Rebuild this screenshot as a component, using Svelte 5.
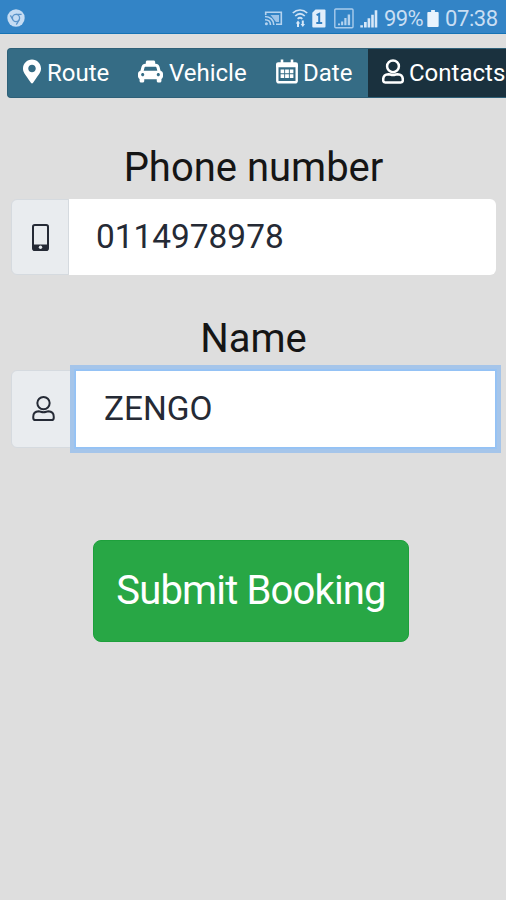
<script lang="ts">
  let phone = $state("0114978978");
  let name = $state("ZENGO");
  let active = $state("Contacts");

  const tabs = ["Route", "Vehicle", "Date", "Contacts"];
</script>

{#snippet person(cls: string)}
  <svg class={cls} viewBox="0 0 22 25" fill="none" stroke="currentColor">
    <circle cx="11" cy="7.3" r="5.9" />
    <path d="M6.4 15.2C3.2 15.4 1.2 17.6 1.2 20.4V21.6C1.2 22.8 2 23.6 3.2 23.6H18.8C20 23.6 20.8 22.8 20.8 21.6V20.4C20.8 17.6 18.8 15.4 15.6 15.2C14.2 15.2 13 16 11 16S7.8 15.2 6.4 15.2Z" />
  </svg>
{/snippet}

<div class="screen">
  <header class="status">
    <svg class="chrome" viewBox="0 0 18 18">
      <circle cx="9" cy="9" r="8.7" fill="#c5dcf3" />
      <circle cx="9" cy="9" r="3.6" fill="#c5dcf3" stroke="#5b94ca" stroke-width="1.3" />
      <path d="M9 5.4H14.6M5.9 10.8L3.4 6.4M12.1 10.8L9.3 15.6" fill="none" stroke="#5b94ca" stroke-width="1.3" />
    </svg>
    <svg class="indicators" viewBox="0 0 116 22">
      <g fill="none" stroke="#b5d3ef" stroke-width="1.6">
        <path d="M1.7 8V5.2H17.3V17.2H12" />
        <path d="M1 9.5C6 9.5 9.8 13 9.8 18M1 12.8C4.4 12.8 6.5 15 6.5 18" />
        <path d="M6.5 8H15V15H12Z" fill="#9cc3e8" stroke="none" />
      </g>
      <circle cx="2.4" cy="16.8" r="1.5" fill="#b5d3ef" />
      <g fill="none" stroke="#cfe2f5" stroke-width="1.7">
        <path d="M28.8 6C33 2 39 2 43.2 6M31.2 9C34.2 6.2 37.8 6.2 40.8 9M33.6 11.8C35.2 10.4 36.8 10.4 38.4 11.8" />
      </g>
      <path d="M34 13.5L36.2 16.5H35V20H33V16.5H31.8ZM38.8 20L36.6 17H37.8V13.5H39.8V17H41Z" fill="#d7e8f8" />
      <path d="M51.5 2.5H60.5Q61.5 2.5 61.5 3.5V19.5Q61.5 20.5 60.5 20.5H49.3Q48.3 20.5 48.3 19.5V5.7Z" fill="#e1eefb" />
      <path d="M52.6 8.2L55.2 6.8V16M52.3 16H58.2" fill="none" stroke="#3380c2" stroke-width="2" />
      <rect x="70.8" y="2" width="18.2" height="18.8" rx="1" fill="none" stroke="#a9ccec" stroke-width="1.4" />
      <path d="M74 18.3V16.5H76.1V18.3ZM77.1 18.3V14.5H79.2V18.3ZM80.3 18.3V11H82.5V18.3ZM83.7 18.3V7.5H86.1V18.3Z" fill="#b5d3ef" />
      <path d="M96.3 20.5V18.2H98.9V20.5ZM100 20.5V15H102.7V20.5ZM103.6 20.5V11.3H106.2V20.5ZM107.2 20.5V7.7H109.8V20.5ZM110.7 20.5V3.3H113.3V20.5Z" fill="#d7e8f8" />
    </svg>
    <span class="percent">99%</span>
    <svg class="battery" viewBox="0 0 12 18">
      <path d="M4 0H8V2H11Q12 2 12 3V17Q12 18 11 18H1Q0 18 0 17V3Q0 2 1 2H4Z" fill="#e8f3fd" />
    </svg>
    <span class="clock">07:38</span>
  </header>

  <nav class="tabs">
    {#each tabs as tab (tab)}
      <button class="tab {tab.toLowerCase()}" class:active={tab === active} onclick={() => (active = tab)}>
        {#if tab === "Route"}
          <svg class="pin" viewBox="0 0 384 512" fill="currentColor">
            <path d="M172.268 501.67C26.97 291.031 0 269.413 0 192 0 85.961 85.961 0 192 0s192 85.961 192 192c0 77.413-26.97 99.031-172.268 309.67-9.535 13.774-29.93 13.773-39.464 0zM192 272c44.183 0 80-35.817 80-80s-35.817-80-80-80-80 35.817-80 80 35.817 80 80 80z" />
          </svg>
        {:else if tab === "Vehicle"}
          <svg class="taxi" viewBox="0 0 512 512" fill="currentColor">
            <path d="M462 241.64l-22-84.84c-9.6-35.2-41.6-60.8-76.8-60.8H352V64c0-17.67-14.33-32-32-32H192c-17.67 0-32 14.33-32 32v32h-11.2c-35.2 0-67.2 25.6-76.8 60.8l-22 84.84C21.41 248.04 0 273.47 0 304v48c0 23.63 12.95 44.04 32 55.12V448c0 17.67 14.33 32 32 32h32c17.67 0 32-14.33 32-32v-32h256v32c0 17.67 14.33 32 32 32h32c17.67 0 32-14.33 32-32v-40.88c19.05-11.09 32-31.5 32-55.12v-48c0-30.53-21.41-55.96-50-62.36zM96 352c-17.67 0-32-14.33-32-32s14.33-32 32-32 32 14.33 32 32-14.33 32-32 32zm20.55-112l17.2-66.36c2.23-8.16 9.59-13.64 15.06-13.64h214.4c5.47 0 12.83 5.48 14.85 12.86L395.48 240h-278.93zM416 352c-17.67 0-32-14.33-32-32s14.33-32 32-32 32 14.33 32 32-14.33 32-32 32z" />
          </svg>
        {:else if tab === "Date"}
          <svg class="calendar" viewBox="0 0 22 25">
            <path d="M6 0.5V5M16 0.5V5" stroke="currentColor" stroke-width="2.6" />
            <path d="M1.3 8V21.7Q1.3 23.3 2.9 23.3H19.1Q20.7 23.3 20.7 21.7V8" fill="none" stroke="currentColor" stroke-width="2.4" />
            <path d="M0 8.3V5.3Q0 3.2 2.2 3.2H19.8Q22 3.2 22 5.3V8.3Z" fill="currentColor" />
            <path d="M4.6 10.6H8.2V14.2H4.6ZM9.1 10.6H12.9V14.2H9.1ZM13.8 10.6H17.4V14.2H13.8ZM4.6 15.2H8.2V19H4.6ZM9.1 15.2H12.9V19H9.1ZM13.8 15.2H17.4V19H13.8Z" fill="currentColor" />
          </svg>
        {:else}
          {@render person("person")}
        {/if}
        <span>{tab}</span>
      </button>
    {/each}
  </nav>

  <form class="contacts-form" onsubmit={(e) => e.preventDefault()}>
    <label class="phone-label" for="phone">Phone number</label>
    <div class="group">
      <div class="addon">
        <svg class="mobile" viewBox="0 0 17 27">
          <rect x="1" y="1" width="15" height="25" rx="1.8" fill="none" stroke="currentColor" stroke-width="2" />
          <path d="M1 20.5H16V26H1Z" fill="currentColor" />
          <circle cx="8.5" cy="23.2" r="1.7" fill="#e9ecef" />
        </svg>
      </div>
      <input id="phone" type="text" bind:value={phone} />
    </div>

    <label class="name-label" for="name">Name</label>
    <div class="group name-group">
      <div class="addon">{@render person("user")}</div>
      <input id="name" class="focused" type="text" spellcheck="false" bind:value={name} />
    </div>

    <button class="submit" type="submit">Submit Booking</button>
  </form>
</div>

<style>
  :global(body) {
    background: #dedede;
  }

  .screen {
    width: 506px;
    height: 900px;
    overflow: hidden;
    background: #dedede;
    color: #151515;
    font-family: Roboto, "Liberation Sans", sans-serif;
  }

  .screen * {
    box-sizing: border-box;
  }

  svg {
    display: block;
    flex: none;
  }

  .status {
    display: flex;
    align-items: center;
    height: 34px;
    padding: 3px 8px 0 7px;
    border-bottom: 1px solid #1573b5;
    background: #3384c6;
    color: #c9def3;
    font-size: 22px;
    white-space: nowrap;
  }

  .chrome {
    width: 18px;
    height: 18px;
    margin-right: auto;
  }

  .indicators {
    width: 116px;
    height: 22px;
    margin: -1px 4px 0 0;
  }

  .percent {
    width: 43px;
    letter-spacing: -0.6px;
  }

  .battery {
    width: 12px;
    height: 17px;
    margin-right: 6px;
  }

  .clock {
    width: 53px;
    letter-spacing: -0.4px;
  }

  .tabs {
    display: flex;
    width: 540px;
    height: 50px;
    margin: 14px 0 0 7px;
    border: 1px solid #2e6078;
    border-width: 1px 0 1px 1px;
    border-radius: 4px;
    overflow: hidden;
    background: #356c85;
  }

  .tab {
    display: flex;
    flex: none;
    align-items: center;
    padding: 0 0 2px 15px;
    border: 0;
    background: none;
    color: #fff;
    font: 24px/1 Roboto, "Liberation Sans", sans-serif;
    white-space: nowrap;
  }

  .tab svg {
    margin-top: -1px;
  }

  .tab span {
    padding-top: 1px;
  }

  .route {
    width: 116px;
  }

  .vehicle {
    width: 137px;
    padding-left: 14px;
  }

  .date {
    width: 107px;
  }

  .tab.contacts {
    width: 180px;
    padding-left: 14px;
  }

  .tab.active {
    background: #1a313e;
  }

  .pin {
    width: 18px;
    height: 25px;
    margin-right: 6px;
  }

  .taxi {
    width: 25px;
    height: 25px;
    margin-right: 6px;
  }

  .calendar {
    width: 22px;
    height: 25px;
    margin-right: 5px;
  }

  .person {
    width: 22px;
    height: 25px;
    margin-right: 5px;
    stroke-width: 2.5;
  }

  .contacts-form {
    display: flex;
    flex-direction: column;
    padding: 45px 10px 0 11px;
  }

  label {
    height: 56px;
    font-size: 40px;
    line-height: 50px;
    text-align: center;
  }

  .name-label {
    margin-top: 39px;
  }

  .group {
    display: flex;
    height: 76px;
  }

  .name-group {
    height: 78px;
  }

  .addon {
    display: flex;
    flex: none;
    align-items: center;
    justify-content: center;
    width: 58px;
    border: 1px solid #d5dadf;
    border-radius: 6px 0 0 6px;
    background: #e9ecef;
    color: #252a35;
  }

  .name-group .addon {
    width: 64px;
  }

  .mobile {
    width: 17px;
    height: 27px;
  }

  .user {
    width: 23px;
    height: 27px;
    margin-top: -1px;
    stroke-width: 1.9;
  }

  input {
    flex: 1;
    min-width: 0;
    padding: 0 0 1px 27px;
    border: 0;
    border-radius: 0 6px 6px 0;
    outline: none;
    background: #fff;
    color: #252a35;
    font: 33.4px/1 Roboto, "Liberation Sans", sans-serif;
  }

  input.focused {
    padding: 0 0 2px 28px;
    border: 1px solid #94c2f5;
    border-radius: 0;
    box-shadow: 0 0 0 1px #98c3f3, 0 0 0 5px #a5c5ea;
  }

  .submit {
    width: 316px;
    height: 102px;
    margin: 92px 0 0 82px;
    padding: 0 0 1px;
    border: 1px solid #1ea03c;
    border-radius: 8px;
    background: #28a745;
    color: #fff;
    font: 40px/1 Roboto, "Liberation Sans", sans-serif;
    letter-spacing: -0.85px;
  }
</style>
